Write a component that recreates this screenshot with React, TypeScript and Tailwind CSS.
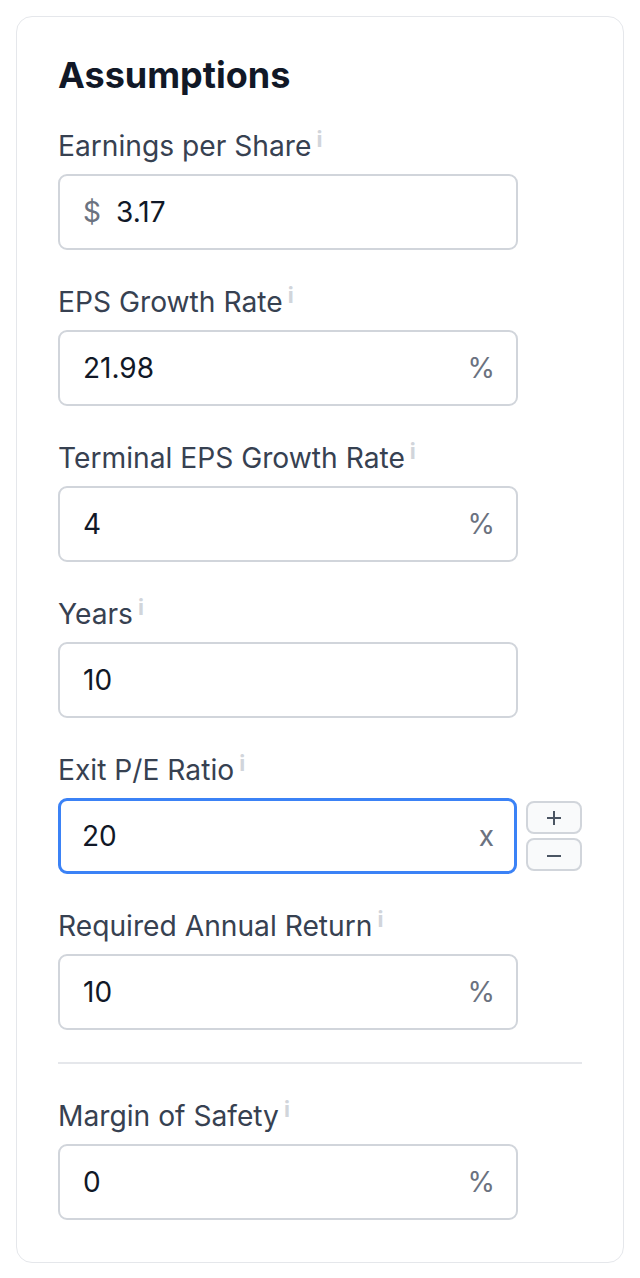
import React from "react";

type Field = {
  label: string;
  value: string;
  prefix?: string;
  suffix?: string;
  focused?: boolean;
  stepper?: boolean;
};

const fields: Field[] = [
  { label: "Earnings per Share", value: "3.17", prefix: "$" },
  { label: "EPS Growth Rate", value: "21.98", suffix: "%" },
  { label: "Terminal EPS Growth Rate", value: "4", suffix: "%" },
  { label: "Years", value: "10" },
  { label: "Exit P/E Ratio", value: "20", suffix: "x", focused: true, stepper: true },
  { label: "Required Annual Return", value: "10", suffix: "%" },
];

function Label({ text }: { text: string }) {
  return (
    <div className="flex items-start h-[40px] leading-[40px] text-[28.2px] text-[#374151]">
      <span>{text}</span>
      <span className="ml-[5px] mt-[2px] text-[22px] leading-[22px] font-bold text-[#d1d5db]">i</span>
    </div>
  );
}

function NumberField({ f }: { f: Field }) {
  return (
    <div className="flex flex-col gap-[8px]">
      <Label text={f.label} />
      <div className="flex items-center gap-[9px]">
        <div
          className={
            f.focused
              ? "flex items-center w-[460px] h-[76px] rounded-[9px] border-[3px] border-[#3b82f6] bg-white pl-[21px] pr-[20px]"
              : "flex items-center w-[460px] h-[76px] rounded-[9px] border-2 border-[#d1d5db] bg-white pl-[23px] pr-[21px]"
          }
        >
          {f.prefix && <span className="text-[28px] text-[#6b7280] mr-[15px]">{f.prefix}</span>}
          <span className="flex-1 text-[28px] text-[#111827]">{f.value}</span>
          {f.suffix && <span className="text-[28px] text-[#6b7280]">{f.suffix}</span>}
        </div>
        {f.stepper && (
          <div className="flex flex-col gap-[4px]">
            <button className="w-[56px] h-[33px] rounded-[8px] border-2 border-[#d1d5db] bg-[#f9fafb] flex items-center justify-center">
              <svg width="16" height="16" viewBox="0 0 16 16" fill="none" stroke="#4b5563" strokeWidth="2">
                <path d="M8 1v14M1 8h14" />
              </svg>
            </button>
            <button className="w-[56px] h-[33px] rounded-[8px] border-2 border-[#d1d5db] bg-[#f9fafb] flex items-center justify-center">
              <svg width="16" height="16" viewBox="0 0 16 16" fill="none" stroke="#4b5563" strokeWidth="2">
                <path d="M1 9h14" />
              </svg>
            </button>
          </div>
        )}
      </div>
    </div>
  );
}

export default function App() {
  return (
    <div className="min-h-[1278px] bg-white p-[16px]" style={{ fontFamily: "Inter, 'Noto Sans', sans-serif" }}>
      <div className="w-[608px] rounded-[16px] border-[1.5px] border-[#e5e7eb] bg-white px-[41px] pt-[38px] pb-[42px]">
        <h2 className="text-[36px] leading-[40px] font-bold text-[#111827] mb-[31px]">Assumptions</h2>
        <div className="flex flex-col gap-[32px]">
          {fields.map((f) => (
            <NumberField key={f.label} f={f} />
          ))}
          <div className="h-[2px] bg-[#e5e7eb]" />
          <NumberField f={{ label: "Margin of Safety", value: "0", suffix: "%" }} />
        </div>
      </div>
    </div>
  );
}
